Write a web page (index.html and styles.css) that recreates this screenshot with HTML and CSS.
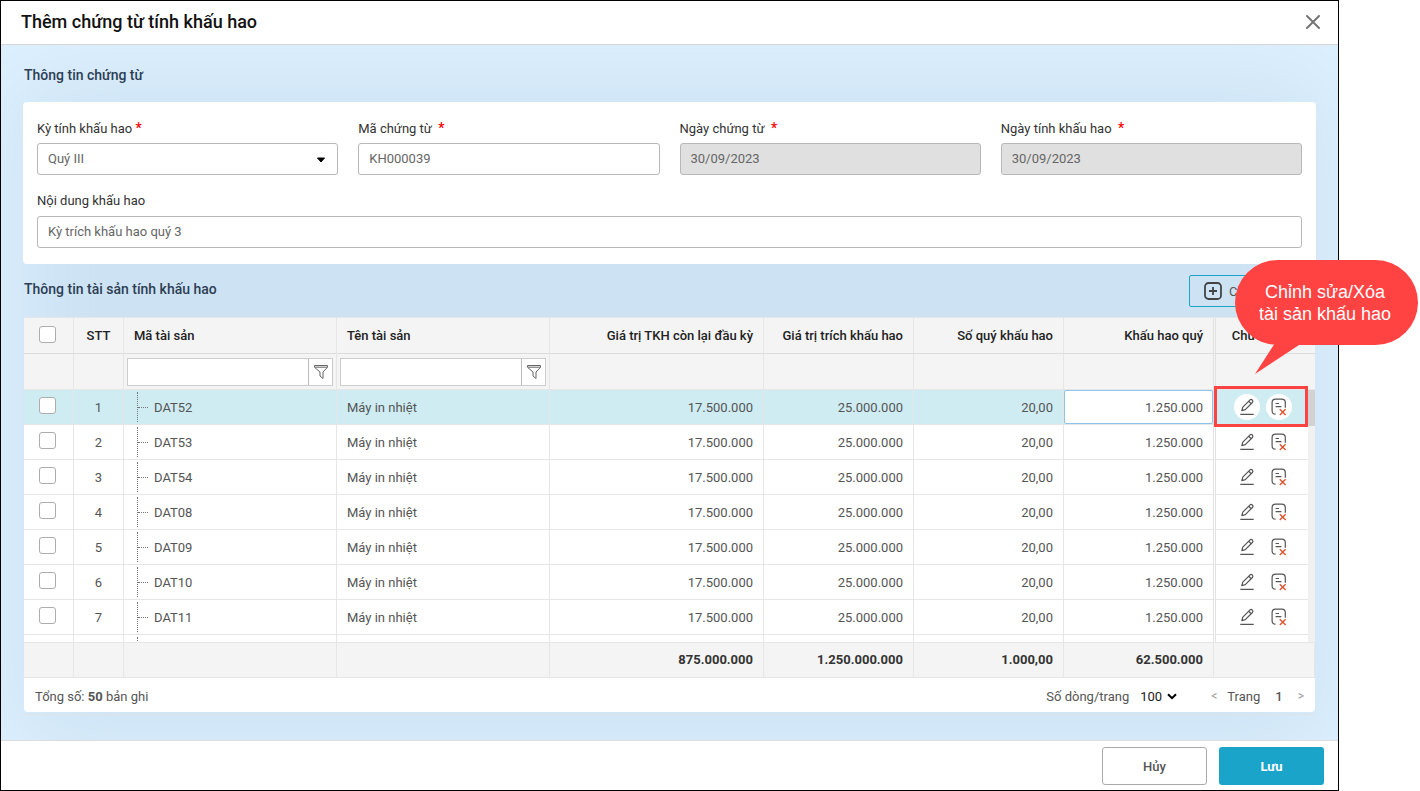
FILE: index.html
```html
<!DOCTYPE html>
<html lang="vi">
<head>
    <meta charset="UTF-8">
    <meta name="viewport" content="width=device-width, initial-scale=1.0">
    <title>Thêm chứng từ tính khấu hao</title>
    <link rel="stylesheet" href="styles.css">
</head>
<body>
    <svg class="sprite" aria-hidden="true">
        <symbol id="icon-funnel" viewBox="0 0 16 16">
            <path d="M1.5 1.5h13v1.8L10 8v6.500L7 12V8L1.5 3.3zM2 3.200h12" fill="none" stroke="#666" stroke-linejoin="round"/>
        </symbol>
        <symbol id="icon-edit" viewBox="0 0 16 18">
            <path d="M2.8 12.6l1-3.4 7-7.1c.7-.7 1.700-.8 2.500-.1.8.8.8 1.700.1 2.500L6.3 11.600zM9.700 3.300l2.500 2.400M1.300 16.300h13.400" fill="none" stroke="#555" stroke-width="1.200" stroke-linejoin="round"/>
        </symbol>
        <symbol id="icon-delete" viewBox="0 0 16 18">
            <path d="M4.600 16.200c-2.400 0-3.500-1.200-3.500-3.400V4.600C1.100 2.200 2.300 1.100 4.600 1.100h6.200c2.300 0 3.500 1.100 3.500 3.500v5.200M4.600 5.500H8M4.600 8.600h5.800" fill="none" stroke="#555" stroke-width="1.200"/>
            <path d="M8.800 11.200l5.800 5.800M14.600 11.200L8.800 17" fill="none" stroke="#e0532f" stroke-width="1.400"/>
        </symbol>
    </svg>

    <div class="modal">
        <div class="modal-header">
            <h1>Thêm chứng từ tính khấu hao</h1>
            <button type="button" class="close-button" aria-label="Đóng">
                <svg width="14" height="14" viewBox="0 0 14 14"><path d="M1 1l12 12M13 1L1 13" stroke="#757575" stroke-width="2" stroke-linecap="round"/></svg>
            </button>
        </div>

        <div class="modal-body">
            <h2>Thông tin chứng từ</h2>
            <form class="card">
                <div class="field">
                    <label for="period">Kỳ tính khấu hao <span class="required">*</span></label>
                    <div class="select-wrap">
                        <select id="period" class="input-field">
                            <option>Quý III</option>
                        </select>
                        <svg class="caret" width="8" height="6" viewBox="0 0 8 6"><path d="M.5 1h7L4 5z" stroke="#000" stroke-linejoin="round"/></svg>
                    </div>
                </div>
                <div class="field">
                    <label for="code">Mã chứng từ&nbsp; <span class="required">*</span></label>
                    <input type="text" id="code" class="input-field" value="KH000039">
                </div>
                <div class="field">
                    <label for="docDate">Ngày chứng từ&nbsp; <span class="required">*</span></label>
                    <input type="text" id="docDate" class="input-field" value="30/09/2023" disabled>
                </div>
                <div class="field">
                    <label for="calcDate">Ngày tính khấu hao&nbsp; <span class="required">*</span></label>
                    <input type="text" id="calcDate" class="input-field" value="30/09/2023" disabled>
                </div>
                <div class="field field-full">
                    <label for="content">Nội dung khấu hao</label>
                    <input type="text" id="content" class="input-field" value="Kỳ trích khấu hao quý 3">
                </div>
            </form>

            <div class="toolbar">
                <h2>Thông tin tài sản tính khấu hao</h2>
                <button type="button" class="choose-button">
                    <svg width="18" height="18" viewBox="0 0 18 18"><rect x="1" y="1" width="16" height="16" rx="3.500" fill="none" stroke="#444" stroke-width="1.800"/><path d="M9 5v8M5 9h8" stroke="#444" stroke-width="1.800"/></svg>
                    <span>Chọn tài sản</span>
                </button>
            </div>

            <div class="grid">
                <div class="grid-view">
                    <table>
                        <colgroup>
                            <col class="col-check"><col class="col-check"><col><col><col class="col-value">
                            <col class="col-number"><col class="col-number"><col class="col-quarter"><col class="col-action">
                        </colgroup>
                        <thead>
                            <tr>
                                <th class="center"><input type="checkbox" aria-label="Chọn tất cả"></th>
                                <th class="center">STT</th>
                                <th>Mã tài sản</th>
                                <th>Tên tài sản</th>
                                <th class="number">Giá trị TKH còn lại đầu kỳ</th>
                                <th class="number">Giá trị trích khấu hao</th>
                                <th class="number">Số quý khấu hao</th>
                                <th class="number">Khấu hao quý</th>
                                <th class="action center">Chức năng</th>
                            </tr>
                            <tr>
                                <td></td>
                                <td></td>
                                <td class="filter-cell">
                                    <div class="filter">
                                        <input type="text" aria-label="Lọc mã tài sản">
                                        <button type="button" aria-label="Kiểu lọc"><svg width="16" height="16"><use href="#icon-funnel"/></svg></button>
                                    </div>
                                </td>
                                <td class="filter-cell">
                                    <div class="filter">
                                        <input type="text" aria-label="Lọc tên tài sản">
                                        <button type="button" aria-label="Kiểu lọc"><svg width="16" height="16"><use href="#icon-funnel"/></svg></button>
                                    </div>
                                </td>
                                <td></td>
                                <td></td>
                                <td></td>
                                <td></td>
                                <td class="action"></td>
                            </tr>
                        </thead>
                        <tbody id="assetRows"></tbody>
                        <tfoot>
                            <tr>
                                <td></td>
                                <td></td>
                                <td></td>
                                <td></td>
                                <td class="number">875.000.000</td>
                                <td class="number">1.250.000.000</td>
                                <td class="number">1.000,00</td>
                                <td class="number">62.500.000</td>
                                <td class="total-action"></td>
                            </tr>
                        </tfoot>
                    </table>
                    <div class="scroll-track"><div class="scroll-thumb"></div></div>
                </div>
                <div class="pager">
                    <div>Tổng số: <b>50</b> bản ghi</div>
                    <div class="pager-right">
                        <label for="pageSize">Số dòng/trang</label>
                        <div class="page-size">
                            <select id="pageSize">
                                <option>100</option>
                            </select>
                            <svg class="chevron" width="10" height="7" viewBox="0 0 10 7"><path d="M1 1.200l4 4 4-4" fill="none" stroke="#000" stroke-width="2"/></svg>
                        </div>
                        <button type="button" class="page-arrow" aria-label="Trang trước">&lt;</button>
                        <span>Trang</span>
                        <span class="page-current">1</span>
                        <button type="button" class="page-arrow" aria-label="Trang sau">&gt;</button>
                    </div>
                </div>
            </div>
        </div>

        <div class="modal-footer">
            <button type="button" class="cancel-button">Hủy</button>
            <button type="button" class="save-button">Lưu</button>
        </div>

        <div class="callout">
            <p>Chỉnh sửa/Xóa<br>tài sản khấu hao</p>
            <svg class="callout-tail" width="44" height="32" viewBox="0 0 44 32"><path d="M0 32L20 1V0h27L44 3z" fill="#ff4343"/></svg>
        </div>
    </div>

    <script>
        const codes = ['DAT52', 'DAT53', 'DAT54', 'DAT08', 'DAT09', 'DAT10', 'DAT11'];
        const assetRows = document.getElementById('assetRows');

        const rows = codes.map((code, i) => `
            <tr class="${i === 0 ? 'selected' : ''}">
                <td class="center"><input type="checkbox" aria-label="Chọn ${code}"></td>
                <td class="center">${i + 1}</td>
                <td class="tree-cell">${code}</td>
                <td>Máy in nhiệt</td>
                <td class="number">17.500.000</td>
                <td class="number">25.000.000</td>
                <td class="number">20,00</td>
                ${i === 0
                    ? '<td class="edit-cell"><input type="text" value="1.250.000" aria-label="Khấu hao quý"></td>'
                    : '<td class="number">1.250.000</td>'}
                <td class="action">
                    <div class="actions">
                        <button type="button" aria-label="Sửa"><svg width="16" height="18"><use href="#icon-edit"/></svg></button>
                        <button type="button" aria-label="Xóa"><svg width="16" height="18"><use href="#icon-delete"/></svg></button>
                    </div>
                    ${i === 0 ? '<div class="highlight"></div>' : ''}
                </td>
            </tr>`);

        rows.push('<tr><td></td><td></td><td class="tree-cell"></td><td></td><td></td><td></td><td></td><td></td><td class="action"></td></tr>');
        assetRows.innerHTML = rows.join('');
    </script>
</body>
</html>
```

FILE: styles.css
```css
* {
    box-sizing: border-box;
}
body {
    font-family: Roboto, "Liberation Sans", sans-serif;
    font-size: 13px;
    margin: 0;
    padding-right: 81px;
    background-color: #fff;
    color: #555;
    overflow: hidden;
}
h1, h2, p {
    margin: 0;
}
button, input, select {
    font: inherit;
    color: inherit;
}
button {
    padding: 0;
    cursor: pointer;
}
.sprite {
    position: absolute;
    width: 0;
    height: 0;
}
.modal {
    position: relative;
    display: flex;
    flex-direction: column;
    height: 100vh;
    border: 1px solid #000;
}
.modal-header {
    display: flex;
    align-items: center;
    justify-content: space-between;
    height: 44px;
    padding: 0 18px 2px 20px;
    border-bottom: 1px solid #d5d5d5;
}
h1 {
    font-size: 18px;
    font-weight: 500;
    color: #111;
}
.close-button {
    display: flex;
    border: none;
    background: none;
}
.modal-body {
    flex: 1;
    min-height: 0;
    display: flex;
    flex-direction: column;
    padding: 16px 22px 25px;
    background-color: #cde3f4;
    box-shadow: inset 0 20px 90px 10px #dff1ff;
}
h2 {
    padding-left: 1px;
    font-size: 14px;
    font-weight: 500;
    line-height: 28px;
    color: #2d3e54;
}

/* Voucher form */
.card {
    display: grid;
    grid-template-columns: repeat(4, 1fr);
    gap: 14px 20px;
    margin-top: 13px;
    padding: 14px 14px 16px;
    background-color: #fff;
    border-radius: 4px;
}
.field label {
    display: block;
    height: 24px;
    line-height: 24px;
    margin-bottom: 3px;
    color: #333;
}
.field-full {
    grid-column: 1 / -1;
}
.required {
    font-size: 14px;
    font-weight: 500;
    color: #f00;
}
.input-field {
    display: block;
    width: 100%;
    height: 32px;
    padding: 0 10px 2px;
    border: 1px solid #b8b8b8;
    border-radius: 3px;
    background-color: #fff;
    color: #666;
    appearance: none;
}
.input-field:disabled {
    background-color: #e0e0e0;
}
.select-wrap, .page-size {
    position: relative;
}
.caret {
    position: absolute;
    right: 13px;
    top: 14px;
    pointer-events: none;
}

/* Asset grid */
.toolbar {
    display: flex;
    justify-content: space-between;
    margin: 11px 0 10px;
}
.choose-button {
    display: flex;
    align-items: center;
    gap: 7px;
    width: 127px;
    height: 32px;
    padding-left: 14px;
    border: 1px solid #1ba4c9;
    border-radius: 2px;
    background: none;
    white-space: nowrap;
}
.grid {
    flex: 1;
    min-height: 0;
    display: flex;
    flex-direction: column;
    margin: 0 1px;
    padding-bottom: 2px;
    border-top: 1px solid #e6e6e6;
    border-bottom: 1px solid #dde3e8;
}
.grid-view {
    position: relative;
    flex: 1;
    min-height: 0;
    overflow: hidden;
}
table {
    width: 100%;
    table-layout: fixed;
    border-collapse: separate;
    border-spacing: 0;
    background-color: #fff;
}
.col-check {
    width: 50px;
}
.col-value {
    width: 214px;
}
.col-number {
    width: 150px;
}
.col-quarter {
    width: 149px;
}
.col-action {
    width: 102px;
}
th, td {
    height: 35px;
    padding: 0 10px;
    border-right: 1px solid #e6e6e6;
    border-bottom: 1px solid #e6e6e6;
    text-align: left;
    white-space: nowrap;
}
thead {
    position: sticky;
    top: 0;
    z-index: 1;
}
thead th, thead td {
    height: 36px;
    background-color: #f4f4f4;
}
thead th {
    border-bottom-color: #dcdcdc;
    font-weight: 500;
    color: #222;
}
tfoot {
    position: sticky;
    bottom: 0;
    z-index: 1;
}
tfoot td {
    height: 36px;
    padding-bottom: 2px;
    border-top: 1px solid #e6e6e6;
    background-color: #f4f4f4;
    font-weight: 700;
    color: #333;
}
.center {
    text-align: center;
}
.number {
    text-align: right;
}
td:nth-last-child(2), th:nth-last-child(2) {
    border-right: none;
}
.action {
    position: relative;
    padding: 0 5px 0 0;
    border-left: 3px double #e2e2e2;
    border-right: none;
}
.total-action {
    border-left: 1px solid #e6e6e6;
}
input[type="checkbox"] {
    display: inline-block;
    width: 17px;
    height: 17px;
    margin: 0;
    border: 1px solid #adadad;
    border-radius: 3px;
    background-color: #fff;
    vertical-align: middle;
    appearance: none;
}
.center:first-child {
    padding: 0 12px 3px 10px;
}
.selected td {
    background-color: #cfecf2;
}
.filter-cell {
    padding: 0 3px;
}
.filter {
    display: flex;
    height: 28px;
    border: 1px solid #ccc;
    background-color: #fff;
}
.filter input {
    flex: 1;
    min-width: 0;
    padding: 0 6px;
    border: none;
}
.filter button {
    display: flex;
    align-items: center;
    justify-content: center;
    width: 24px;
    border: none;
    border-left: 1px solid #bbb;
    background: none;
}
.tree-cell {
    position: relative;
    padding-left: 30px;
}
.tree-cell::before {
    content: "";
    position: absolute;
    left: 13px;
    top: 2px;
    bottom: 2px;
    border-left: 1px dotted #777;
}
.tree-cell::after {
    content: "";
    position: absolute;
    left: 14px;
    top: 17px;
    width: 10px;
    border-top: 1px dotted #777;
}
.edit-cell {
    padding: 0;
}
.edit-cell input {
    display: block;
    width: 100%;
    height: 34px;
    padding: 0 9px;
    border: 1px solid #8fc4ec;
    border-radius: 2px;
    background-color: #fff;
    text-align: right;
}
.actions {
    display: flex;
    justify-content: center;
    gap: 6px;
}
.actions button {
    display: flex;
    align-items: center;
    justify-content: center;
    width: 26px;
    height: 26px;
    border: none;
    border-radius: 50%;
    background-color: #fff;
}
.selected .action {
    z-index: 2;
}
.highlight {
    position: absolute;
    top: -4px;
    right: 7px;
    bottom: -3px;
    left: -2px;
    border: 3px solid #fa4343;
    pointer-events: none;
}
.scroll-track {
    position: absolute;
    z-index: 3;
    top: 72px;
    right: 0;
    bottom: 36px;
    width: 7px;
    background-color: #f1f1f1;
}
.scroll-thumb {
    height: 36px;
    background-color: #d2d2d2;
}
.pager {
    display: flex;
    align-items: center;
    justify-content: space-between;
    height: 34px;
    padding: 2px 11px 0;
    border-radius: 0 0 4px 4px;
    background-color: #fff;
}
.pager-right {
    display: flex;
    align-items: center;
}
.page-size {
    margin: 0 34px 0 11px;
}
.page-size select {
    display: block;
    width: 37px;
    padding: 0;
    border: none;
    background: none;
    color: #222;
    appearance: none;
}
.chevron {
    position: absolute;
    right: 0;
    top: 4px;
    pointer-events: none;
}
.page-arrow {
    border: none;
    background: none;
    font-size: 12px;
    color: #999;
}
.page-arrow:first-of-type {
    margin-right: 10px;
}
.page-current {
    margin: 0 15px;
    font-weight: 500;
}

.modal-footer {
    display: flex;
    justify-content: flex-end;
    gap: 12px;
    height: 50px;
    padding: 6px 14px 0;
    border-top: 1px solid #dcdcdc;
}
.modal-footer button {
    width: 105px;
    height: 38px;
    border-radius: 3px;
    font-weight: 500;
}
.cancel-button {
    border: 1px solid #aaa;
    background-color: #fff;
}
.modal-footer .save-button {
    border: none;
    background-color: #1ba4c9;
    color: #fff;
    font-weight: 700;
}

/* Note bubble pointing at the row actions */
.callout {
    position: absolute;
    z-index: 4;
    top: 259px;
    right: -80px;
    display: flex;
    align-items: center;
    justify-content: center;
    width: 183px;
    height: 85px;
    padding-right: 3px;
    border-radius: 43px;
    background-color: #ff4343;
}
.callout p {
    font-family: "Liberation Sans", Arial, sans-serif;
    font-size: 18px;
    line-height: 22px;
    text-align: center;
    color: #fff;
}
.callout-tail {
    position: absolute;
    left: 20px;
    top: 82px;
}
```
